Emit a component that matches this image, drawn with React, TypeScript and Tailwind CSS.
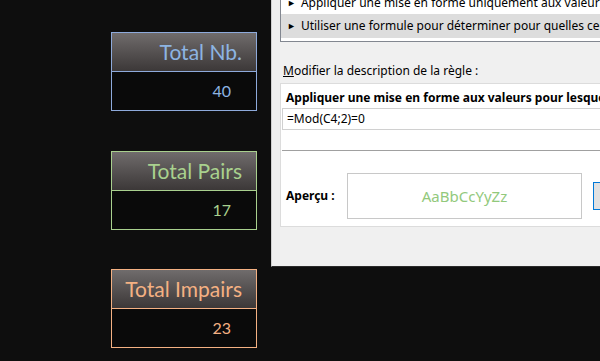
const cards = [
  { title: "Total Nb.", value: "40", border: "border-[#8eaadb]", text: "text-[#8db4e2]", mt: "mt-[32px]" },
  { title: "Total Pairs", value: "17", border: "border-[#a9d08e]", text: "text-[#a9d18e]", mt: "mt-[40px]" },
  { title: "Total Impairs", value: "23", border: "border-[#f4b183]", text: "text-[#f4b183]", mt: "mt-[39px]" },
];

function Card({ title, value, border, text, mt }: (typeof cards)[number]) {
  return (
    <div className={`${mt} w-[146px] border ${border}`}>
      <div
        className={`h-[39px] flex items-center justify-end pr-[14px] border-b ${border} bg-gradient-to-b from-[#706c6c] to-[#3c3838] ${text} text-[21px]`}
      >
        {title}
      </div>
      <div className={`h-[38px] flex items-center justify-end pr-[25px] bg-[#0a0a0a] ${text} text-[16px]`}>
        {value}
      </div>
    </div>
  );
}

export default function App() {
  return (
    <div className="w-[600px] h-[361px] bg-[#0e0e0e] flex overflow-hidden">
      <div className="w-[271px] shrink-0 pl-[111px] font-['Lato',sans-serif]">
        {cards.map((c) => (
          <Card key={c.title} {...c} />
        ))}
      </div>

      <div className="flex-1 h-[267px] bg-[#f0f0f0] border-l border-[#d0d0d0] border-b border-b-[#2a2a2a] pl-[8px] font-['Noto_Sans',sans-serif] text-[12px] text-black overflow-hidden">
        <div className="mt-[-10px] w-[400px] bg-white border border-[#828790] pb-[3px]">
          <div className="h-[23px] flex items-center pl-[6px] whitespace-nowrap">
            <span className="text-[9px] mr-[5px]">►</span>Appliquer une mise en forme uniquement aux valeurs
          </div>
          <div className="h-[24px] flex items-center pl-[6px] bg-[#dddddd] whitespace-nowrap">
            <span className="text-[9px] mr-[5px]">►</span>Utiliser une formule pour déterminer pour quelles cellules
          </div>
        </div>

        <div className="mt-[20px] pl-[3px] whitespace-nowrap">
          <span className="underline">M</span>odifier la description de la règle :
        </div>

        <div className="mt-[3px] w-[400px] h-[144px] bg-white border border-[#dcdcdc] pl-[5px]">
          <div className="mt-[5px] font-bold whitespace-nowrap">
            Appliquer une mise en forme aux valeurs pour lesquelles cette formule est vraie :
          </div>
          <div className="mt-[1px] ml-[-4px] h-[22px] border border-[#d0d0d0] flex items-center pl-[4px]">
            =Mod(C4;2)=0
          </div>
          <div className="mt-[20px] ml-[-4px] border-t border-[#a0a0a0]" />
          <div className="mt-[22px] flex items-center">
            <div className="w-[61px] font-bold">Aperçu :</div>
            <div className="w-[235px] h-[46px] border border-[#c8c8c8] flex items-center justify-center text-[#92c97c] text-[15px]">
              AaBbCcYyZz
            </div>
            <div className="ml-[11px] w-[40px] h-[28px] border border-[#0078d7] bg-[#e1e1e1]" />
          </div>
        </div>
      </div>
    </div>
  );
}
